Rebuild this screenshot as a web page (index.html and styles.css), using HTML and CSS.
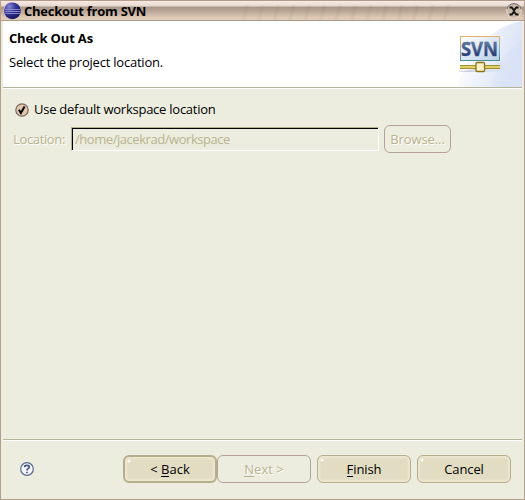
FILE: index.html
```html
<!DOCTYPE html>
<html lang="en">
<head>
<meta charset="utf-8">
<title>Checkout from SVN</title>
<link rel="stylesheet" href="styles.css">
</head>
<body>
<div class="window">
  <div class="titlebar">
    <svg class="app-icon" width="20" height="19" viewBox="0 0 20 19">
      <defs><radialGradient id="orb" cx=".32" cy=".25" r=".8"><stop offset="0" stop-color="#8585d2"/><stop offset=".45" stop-color="#393b9d"/><stop offset="1" stop-color="#111257"/></radialGradient></defs>
      <ellipse cx="8.5" cy="9.5" rx="7" ry="8.5" fill="#dcb9cc"/>
      <circle cx="10.4" cy="9.8" r="8.4" fill="url(#orb)"/>
      <path d="M3 8.5h15M2.5 10.5h16M3 12.5h15" stroke="#a6a6df" stroke-width=".7"/>
    </svg>
    <span class="title">Checkout from SVN</span>
    <svg class="close" width="16" height="17" viewBox="0 0 16 17">
      <circle cx="8" cy="9" r="7.3" fill="#cbb9a9" stroke="#e5d8ce"/>
      <path d="M1 7a7.3 7.3 0 0 1 14 0" fill="none" stroke="#69605b"/>
      <path d="M3.5 5.5h2.3L8 8.5l2.2-3h2.3M3.5 12.5h2.3L8 9.5l2.2 3h2.3M8 8v2" fill="none" stroke="#111" stroke-width="1.8"/>
    </svg>
  </div>
  <header class="banner">
    <div class="banner-text">
      <h1 class="heading">Check Out As</h1>
      <p class="subtitle">Select the project location.</p>
    </div>
    <svg class="logo" width="75" height="66" viewBox="0 0 75 66">
      <defs>
        <linearGradient id="sky" x1="0" y1="0" x2="1" y2=".3"><stop offset=".15" stop-color="#fff"/><stop offset="1" stop-color="#dae3f6"/></linearGradient>
        <linearGradient id="panel" x1="0" y1="0" x2="1" y2="1"><stop offset="0" stop-color="#fff"/><stop offset="1" stop-color="#b9cfe8"/></linearGradient>
        <linearGradient id="frame" x1="0" y1="1" x2="0" y2="0"><stop offset="0" stop-color="#4c8f91"/><stop offset=".5" stop-color="#8fb5ad"/><stop offset="1" stop-color="#e0b26c"/></linearGradient>
        <linearGradient id="shade"><stop offset="0" stop-color="#b0b1c6"/><stop offset="1" stop-color="#d9e0f0" stop-opacity="0"/></linearGradient>
        <linearGradient id="letters" x1="0" y1="0" x2="0" y2="1"><stop offset=".2" stop-color="#6d83a5"/><stop offset=".8" stop-color="#203670"/></linearGradient>
      </defs>
      <path d="M75 0Q54 4 42 16Q20 34 10 66H75Z" fill="url(#sky)"/>
      <path d="M75 20Q52 32 44 66H75Z" fill="#d6e0f7" opacity=".4"/>
      <path d="M11 51L53 51L69 41L53 41L45 45Z" fill="url(#shade)" opacity=".75"/>
      <rect x="13.5" y="15.5" width="39" height="24" fill="url(#panel)" stroke="url(#frame)"/>
      <text class="logo-text" x="14" y="35" textLength="37" lengthAdjust="spacingAndGlyphs" fill="url(#letters)" stroke="#445c8c" stroke-width=".4">SVN</text>
      <path d="M13 46h40" stroke="#a0912d" stroke-width="4"/>
      <path d="M13 46h40" stroke="#f4e681" stroke-width="1.7"/>
      <rect x="29" y="41.5" width="8.5" height="9" rx="1" fill="#fff0ca" stroke="#8b7416" stroke-width="1.3"/>
    </svg>
  </header>
  <main class="content">
    <label class="option">
      <svg width="14" height="14" viewBox="0 0 14 14">
        <circle cx="7" cy="7" r="6.2" fill="#e3c6ae" stroke="#78675d" stroke-width="1.2"/>
        <path d="M3.9 6.8l2 3.2 3.7-6.5" fill="none" stroke="#000" stroke-width="2"/>
      </svg>
      <span class="option-text">Use default workspace location</span>
    </label>
    <div class="location">
      <span class="location-label">Location:</span>
      <div class="field"><span class="path">/home/jacekrad/workspace</span></div>
      <div class="button disabled browse"><span>Browse...</span></div>
    </div>
  </main>
  <footer class="footer">
    <svg class="help" width="14" height="14" viewBox="0 0 14 14">
      <circle cx="7" cy="7" r="6.3" fill="#f5f9ff" stroke="#56668e" stroke-width="1.2"/>
      <path d="M4.7 5.3V4.8Q4.8 3.4 7 3.4Q9.3 3.4 9.3 5Q9.3 6 8 6.8Q7 7.3 7 8.4M7 9.7v1.5" fill="none" stroke="#42557f" stroke-width="1.7"/>
    </svg>
    <div class="actions">
      <div class="button default"><span>&lt; <u>B</u>ack</span></div>
      <div class="button disabled next"><span><u>N</u>ext &gt;</span></div>
      <div class="button finish"><span><u>F</u>inish</span></div>
      <div class="button cancel"><span>Cancel</span></div>
    </div>
  </footer>
</div>
</body>
</html>
```
FILE: styles.css
```css
* { box-sizing: border-box; }
body {
  margin: 0;
  font: 13px/18px "Open Sans", "Noto Sans", sans-serif;
  color: #000;
}
.window {
  width: 525px;
  height: 500px;
  display: flex;
  flex-direction: column;
  background: #ededdf;
  border: 1px solid #b39d8c;
}
.titlebar {
  height: 20px;
  flex: none;
  display: flex;
  align-items: center;
  padding: 0 2px 0 1px;
  background:
    repeating-linear-gradient(104deg, transparent 0 8px, rgba(125, 95, 75, .09) 11px, transparent 14px 15px) 235px 4px / 220px 15px no-repeat,
    linear-gradient(#f8e9e3 0, #eadbd2 24%, #a99788 34%, #c2ad9d 60%, #dcc8b5 85%, #e0ccba 100%);
  border-bottom: 1px solid #b39b88;
}
.app-icon { flex: none; }
.title { margin-left: 2px; font-weight: 700; letter-spacing: -.24px; white-space: nowrap; padding-top: 1px; line-height: 17px; }
.close { margin-left: auto; }
.banner {
  height: 67px;
  flex: none;
  display: flex;
  justify-content: space-between;
  margin: 0 2px;
  background: #fff;
  border-bottom: 1px solid #b3b598;
  overflow: hidden;
}
.banner-text { padding: 8px 0 0 6px; }
.heading { margin: 0; font-size: 13px; line-height: 18px; letter-spacing: -.17px; }
.subtitle { margin: 6px 0 0; letter-spacing: -.22px; }
.logo { flex: none; }
.logo-text { font: 700 20px "Open Sans", sans-serif; }
.content { flex: 1; border-top: 1px solid #fff; margin: 0 2px; padding-top: 12px; }
.option { display: flex; align-items: center; height: 18px; padding-left: 12px; gap: 5px; }
.option-text { letter-spacing: -.25px; padding-bottom: 2px; }
.location { display: flex; align-items: center; height: 28px; margin-top: 6px; color: #b8b390; }
.location-label { width: 58px; margin-left: 10px; flex: none; letter-spacing: -.35px; text-shadow: 1px 1px #fff; }
.field {
  width: 308px;
  height: 24px;
  padding: 2px 0 0 3px;
  border: 1px solid #fff;
  border-top-color: #b4b294;
  border-left-color: #b4b294;
  box-shadow: inset 1px 1px #000;
}
.path { letter-spacing: -.45px; }
.button {
  width: 94px;
  height: 28px;
  flex: none;
  display: flex;
  align-items: center;
  justify-content: center;
  border: 1px solid #b5ae8b;
  border-radius: 6px;
  background: radial-gradient(circle at 4px 4px, #fff 0 1px, transparent 2px), #e2dcc3;
  box-shadow: inset 0 0 2px 2px #ece7d0;
}
.button u { text-decoration: none; border-bottom: 1px solid; display: inline-block; line-height: 14px; }
.disabled { border-color: #b3a19a; background: none; color: #b8b390; box-shadow: none; text-shadow: 1px 1px #fff; }
.browse { width: 67px; margin-left: 5px; letter-spacing: -.1px; }
.default { border: 2px solid #b5ae8b; }
.finish, .cancel { margin-left: 6px; letter-spacing: -.1px; }
.footer {
  height: 60px;
  flex: none;
  display: flex;
  justify-content: space-between;
  margin: 0 2px;
  padding: 15px 11px 0 17px;
  border-top: 1px solid #b3b598;
  box-shadow: inset 0 1px #fff;
}
.help { margin-top: 7px; }
.actions { display: flex; }
```
